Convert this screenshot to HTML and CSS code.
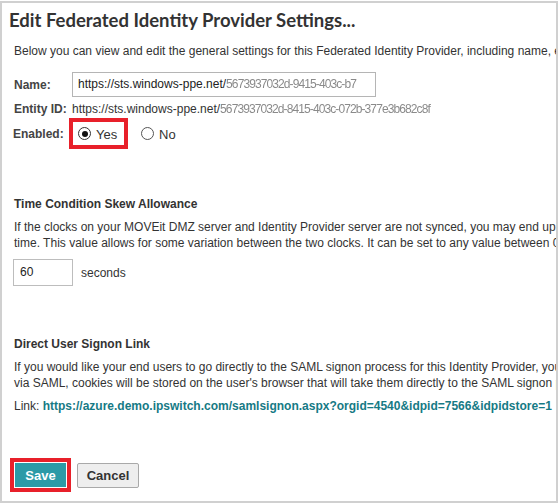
FILE: index.html
```html
<!DOCTYPE html>
<html>
<head>
<meta charset="utf-8">
<link rel="stylesheet" href="styles.css">
</head>
<body>
<div class="panel">
  <h1 class="title">Edit Federated Identity Provider Settings...</h1>
  <div class="content">
    <p class="line intro">Below you can view and edit the general settings for this Federated Identity Provider, including name, entity ID and enabled status.</p>

    <div class="row name-row">
      <span class="label">Name:</span>
      <div class="textbox">https://sts.windows-ppe.net/<span class="blur">5673937032d-9415-403c-b7</span></div>
    </div>

    <div class="row entity-row">
      <span class="label">Entity ID:</span>
      <span class="value">https://sts.windows-ppe.net/<span class="blur">5673937032d-8415-403c-072b-377e3b682c8f</span></span>
    </div>

    <div class="row enabled-row">
      <span class="label">Enabled:</span>
      <div class="highlight radio-hl">
        <span class="radio checked"></span><span class="radio-text">Yes</span>
      </div>
      <div class="radio-opt">
        <span class="radio"></span><span class="radio-text">No</span>
      </div>
    </div>

    <h2 class="section-head skew-head">Time Condition Skew Allowance</h2>
    <p class="para">
      <span class="line">If the clocks on your MOVEit DMZ server and Identity Provider server are not synced, you may end up rejecting assertions that are still valid at the current</span>
      <span class="line">time. This value allows for some variation between the two clocks. It can be set to any value between 0 and 600 seconds.</span>
    </p>
    <div class="row seconds-row">
      <div class="textbox small">60</div>
      <span class="unit">seconds</span>
    </div>

    <h2 class="section-head link-head">Direct User Signon Link</h2>
    <p class="para">
      <span class="line">If you would like your end users to go directly to the SAML signon process for this Identity Provider, you can give them this link. Once they have signed on</span>
      <span class="line">via SAML, cookies will be stored on the user's browser that will take them directly to the SAML signon process next time.</span>
    </p>
    <p class="line link-line">Link: <a class="link" href="#">https://azure.demo.ipswitch.com/samlsignon.aspx?orgid=4540&amp;idpid=7566&amp;idpidstore=1</a></p>

    <div class="buttons">
      <div class="highlight btn-hl"><button class="btn save">Save</button></div>
      <button class="btn cancel">Cancel</button>
    </div>
  </div>
</div>
</body>
</html>
```

FILE: styles.css
```css
html, body {
  margin: 0;
  padding: 0;
  background: #ffffff;
}

.panel {
  box-sizing: border-box;
  width: 558px;
  height: 502px;
  margin-top: 1px;
  border: 2px solid #d0d0d0;
  overflow: hidden;
  font-family: "Liberation Sans", Arial, sans-serif;
  font-size: 12px;
  color: #333333;
}

.title {
  margin: 5px 0 0 7px;
  font-family: Lato, "Open Sans", sans-serif;
  font-weight: 700;
  font-size: 18.5px;
  line-height: 24px;
  color: #333333;
  white-space: nowrap;
}

.content {
  padding-left: 12px;
}

.line {
  display: block;
  white-space: nowrap;
  line-height: 16px;
  margin: 0;
}

.intro {
  margin-top: 11px;
}

.row {
  display: flex;
  align-items: center;
  white-space: nowrap;
}

.label {
  width: 58px;
  flex: none;
  font-weight: bold;
  color: #444444;
}

.name-row {
  margin-top: 13px;
}

.textbox {
  box-sizing: border-box;
  height: 25px;
  width: 304px;
  flex: none;
  border: 1px solid #b5b5b5;
  padding: 0 5px;
  line-height: 23px;
  color: #222222;
  overflow: hidden;
  white-space: nowrap;
}

.blur {
  display: inline-block;
  color: #8a8a8a;
  filter: blur(0.6px);
  letter-spacing: -0.9px;
}

.entity-row {
  margin-top: 4px;
  line-height: 16px;
}

.value {
  color: #333333;
}

.enabled-row {
  margin-top: 1px;
  margin-left: -1px;
}

.enabled-row .label {
  width: 56px;
}

.highlight {
  border: 4px solid #e8202a;
  box-sizing: border-box;
}

.radio-hl {
  display: flex;
  align-items: center;
  height: 31px;
  width: 59px;
  padding-left: 5px;
}

.radio-opt {
  display: flex;
  align-items: center;
  margin-left: 13px;
}

.radio {
  box-sizing: border-box;
  width: 13px;
  height: 13px;
  border-radius: 50%;
  border: 1px solid #555555;
  background: #ffffff;
  position: relative;
  flex: none;
}

.radio.checked {
  border-color: #333333;
}

.radio.checked::after {
  content: "";
  position: absolute;
  left: 2.5px;
  top: 2.5px;
  width: 6px;
  height: 6px;
  border-radius: 50%;
  background: #111111;
}

.radio-text {
  margin-left: 5px;
  font-size: 13px;
  color: #333333;
  padding-top: 2px;
}

.section-head {
  margin: 0;
  font-size: 12px;
  line-height: 16px;
  font-weight: bold;
  color: #333333;
  white-space: nowrap;
}

.skew-head {
  margin-top: 47px;
}

.para {
  margin: 7px 0 0 0;
}

.seconds-row {
  margin-top: 8px;
  margin-left: -1px;
}

.textbox.small {
  width: 60px;
  height: 27px;
  line-height: 25px;
  padding-left: 6px;
  border-color: #bdbdbd;
}

.unit {
  margin-left: 8px;
  color: #333333;
}

.link-head {
  margin-top: 50px;
}

.link-line {
  margin-top: 7px;
}

.link {
  color: #167a85;
  font-weight: bold;
  text-decoration: none;
}

.buttons {
  display: flex;
  align-items: center;
  margin-top: 44px;
  margin-left: -4px;
}

.btn-hl {
  padding: 1px;
  width: 61px;
  height: 34px;
  display: flex;
  background: #ffffff;
}

.btn {
  font-family: "Liberation Sans", Arial, sans-serif;
  font-size: 13px;
  font-weight: bold;
  box-sizing: border-box;
  margin: 0;
  cursor: pointer;
}

.save {
  width: 51px;
  height: 24px;
  border: none;
  background: #2c9aa7;
  color: #ffffff;
  padding: 0;
}

.cancel {
  margin-left: 6px;
  width: 62px;
  height: 25px;
  border: 1px solid #a9a9a9;
  border-radius: 2px;
  background: #eeeeee;
  color: #333333;
  padding: 0;
}
```
